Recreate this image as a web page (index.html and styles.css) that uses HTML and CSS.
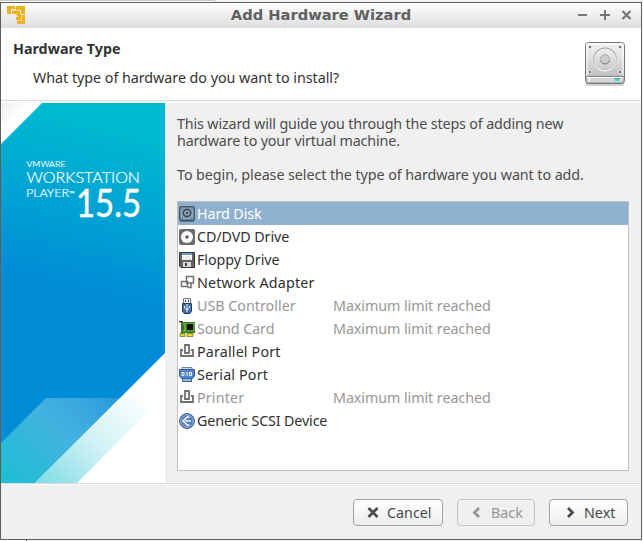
FILE: index.html
```html
<!DOCTYPE html>
<html lang="en">
<head>
<meta charset="utf-8">
<title>Add Hardware Wizard</title>
<link rel="stylesheet" href="styles.css">
</head>
<body>
<div class="desk-top"></div>
<main class="window">
  <header class="titlebar">
    <svg class="app-icon" width="18" height="18" viewBox="0 0 18 18" fill="#edb21c"><path d="M0 0H8V3H4V8H0ZM9 0H18V8H14V4H9ZM5 5H13V8H5ZM9 8H14V14H9V11H11ZM15 9H18V18H10V15H15Z"/><path d="M5 4.500H13M8.500 1V3M14.500 9V14.500H11" fill="none" stroke="#f6dc96"/></svg>
    <h1 class="title">Add Hardware Wizard</h1>
    <svg class="controls" width="56" height="12" viewBox="0 0 56 12" fill="none" stroke="#777" stroke-width="2"><path d="M2 5H11M24 5H34M29 0V10"/><path d="M46.500 1L54.500 9M54.500 1L46.500 9" stroke-width="2.300"/></svg>
  </header>
  <section class="heading">
    <div>
      <h2 class="step">Hardware Type</h2>
      <p class="question">What type of hardware do you want to install?</p>
    </div>
    <svg class="disk" width="42" height="46" viewBox="0 0 42 46">
      <defs>
        <linearGradient id="metal" x2="0" y2="1"><stop stop-color="#f2f2f2"/><stop offset=".35" stop-color="#e2e2e2"/><stop offset="1" stop-color="#b0b0b0"/></linearGradient>
        <linearGradient id="ring" x2="0" y2="1"><stop stop-color="#9b9b9b"/><stop offset="1" stop-color="#f2f2f2"/></linearGradient>
      </defs>
      <rect x="2" y="39" width="38" height="6" rx="2" fill="#999" opacity=".45"/>
      <rect x="1.500" y="1.500" width="39" height="41" rx="3" fill="url(#metal)" stroke="#777"/>
      <path d="M3 35V3H39V35" fill="none" stroke="#fff"/>
      <path d="M2 35.500H40" stroke="#858585"/>
      <path d="M3 37H39V41H3Z" fill="#d5d5d5"/><path d="M3 36.500H39M5.500 37V41" stroke="#fff"/>
      <circle cx="21" cy="18.500" r="11.500" fill="none" stroke="url(#ring)" stroke-width="1.200"/>
      <circle cx="21" cy="18.500" r="4.800" fill="#ccc" stroke="#aaa"/><path d="M16.500 20A5 5 0 0 0 25.500 20" fill="none" stroke="#888"/>
      <g fill="#737373" stroke="#f5f5f5" stroke-width=".8"><circle cx="6" cy="6" r="1.700"/><circle cx="36" cy="6" r="1.700"/><circle cx="6" cy="31" r="1.700"/><circle cx="36" cy="31" r="1.700"/></g>
      <path d="M30 37.500H36" stroke="#888"/><path d="M31 39H35.500" stroke="#16e6f2" stroke-width="2"/>
    </svg>
  </section>
  <div class="content">
    <svg class="brand" width="164" height="380" viewBox="0 0 164 380">
      <defs>
        <linearGradient id="sky" gradientUnits="userSpaceOnUse" x1="100" y1="20" x2="60" y2="185"><stop stop-color="#00bad0"/><stop offset="1" stop-color="#008cd6"/></linearGradient>
        <linearGradient id="band" gradientUnits="userSpaceOnUse" x1="15" y1="380" x2="110" y2="285"><stop stop-color="#21bdd4"/><stop offset=".5" stop-color="#43b3e0"/><stop offset=".7" stop-color="#3da9df"/><stop offset="1" stop-color="#2798dc"/></linearGradient>
        <linearGradient id="fade" gradientUnits="userSpaceOnUse" x1="42" y1="385" x2="140" y2="287"><stop stop-color="#7edde5"/><stop offset=".5" stop-color="#d1f2f5"/><stop offset="1" stop-color="#fff"/></linearGradient>
        <linearGradient id="corner" x2="1" y2="1"><stop stop-color="#f0f0f0"/><stop offset=".4" stop-color="#fff"/></linearGradient>
      </defs>
      <rect width="164" height="380" fill="url(#sky)"/>
      <path d="M0 0H41L0 41Z" fill="url(#corner)"/>
      <path d="M45 295H119L34 380H0V340Z" fill="url(#band)"/>
      <path d="M164 250V380H34Z" fill="#fff"/>
      <path d="M119 295H161L76 380H34Z" fill="url(#fade)"/>
      <g class="brand-text">
        <text x="25.500" y="63.500" font-size="8.500" textLength="39" lengthAdjust="spacingAndGlyphs">VMWARE</text>
        <text x="25.500" y="80" font-size="15" textLength="113.500" lengthAdjust="spacingAndGlyphs">WORKSTATION</text>
        <text x="25" y="94" font-size="11.500" textLength="43" lengthAdjust="spacingAndGlyphs">PLAYER</text>
        <text x="68" y="94" font-size="8">™</text>
        <text class="version" x="75" y="114" font-size="39" textLength="65" lengthAdjust="spacingAndGlyphs">15.5</text>
      </g>
    </svg>
    <section class="body">
      <p class="intro"><span class="line">This wizard will guide you through the steps of adding new</span><span class="line">hardware to your virtual machine.</span></p>
      <p class="intro begin"><span class="line wide">To begin, please select the type of hardware you want to add.</span></p>
      <ul class="list">
        <li class="row selected">
          <svg width="16" height="16" viewBox="0 0 16 16"><rect x=".75" y=".75" width="14.500" height="13.500" rx="1.500" fill="#8faac1" stroke="#465766" stroke-width="1.500"/><path d="M1 15H15" stroke="#465766" stroke-width="1.500"/><circle cx="8" cy="7" r="3.700" fill="#8faac1" stroke="#3e4e5d" stroke-width="1.800"/><circle cx="8" cy="7" r="1.200" fill="#34495b"/><path d="M2.500 3H4M12 3H13.500M2.500 12H4M12 12H13.500" stroke="#465766"/></svg>
          <span class="name">Hard Disk</span></li>
        <li class="row">
          <svg width="16" height="16" viewBox="0 0 16 16"><rect width="16" height="16" rx="2" fill="#6c6c6c"/><circle cx="8" cy="8" r="6" fill="#fff"/><circle cx="8" cy="8" r="1.700" fill="#555"/></svg>
          <span class="name">CD/DVD Drive</span></li>
        <li class="row">
          <svg width="16" height="16" viewBox="0 0 16 16"><path d="M.5.5H15.500V15.500H2L.5 14Z" fill="#626262" stroke="#333"/><path d="M3 1H13V8H3Z" fill="#f7faff"/><path d="M3 1H13V3H3Z" fill="#7099cb"/><path d="M4 5H12M4 7H12" stroke="#ddd"/><path d="M4 10H12V15H4Z" fill="#d9d9d9"/><path d="M6 11H8V14H6Z" fill="#444"/></svg>
          <span class="name">Floppy Drive</span></li>
        <li class="row">
          <svg width="16" height="16" viewBox="0 0 16 16" fill="none" stroke="#707070" stroke-width="1.500"><path d="M7.500 1.500H14.500V8H7.500ZM2.500 6.500H8.500V11.500H2.500ZM8.500 12.500H12V8"/></svg>
          <span class="name plus">Network Adapter</span></li>
        <li class="row disabled">
          <svg width="16" height="16" viewBox="0 0 16 16"><path d="M4.500.5H11.500V6H4.500Z" fill="#eee" stroke="#777"/><path d="M6 2H7V4H6ZM9 2H10V4H9Z" fill="#444"/><path d="M3.500 5.500H12.500V13L11 15.500H5L3.500 13Z" fill="#456da8" stroke="#1d3e75"/><path d="M8 6V14M5.500 8V10L8 12L10.500 10V8" fill="none" stroke="#f4f7ff"/></svg>
          <span class="name even">USB Controller</span><span class="limit">Maximum limit reached</span></li>
        <li class="row disabled">
          <svg width="16" height="16" viewBox="0 0 16 16"><path d="M0 .5H3V15" fill="none" stroke="#222" stroke-width="1.500"/><path d="M3 1H16V12H3Z" fill="#347b20"/><path d="M4 3H6V10H4" fill="none" stroke="#8bd44a"/><rect x="8" y="3" width="6" height="6" fill="#111"/><path d="M7.500 2.500H15M7.500 9.800H15M15 2.500V10" fill="none" stroke="#b0d46b" stroke-dasharray="1 1"/><path d="M1 12.500H6V15.500H1ZM8 12.500H14V15.500H8Z" fill="#e9d829" stroke="#4b5710" stroke-width=".6"/></svg>
          <span class="name">Sound Card</span><span class="limit">Maximum limit reached</span></li>
        <li class="row">
          <svg width="16" height="16" viewBox="0 0 16 16" fill="none" stroke="#707070" stroke-width="1.800"><path d="M6 9V1H10V9ZM4 6H2V12H14V6H12"/></svg>
          <span class="name plus">Parallel Port</span></li>
        <li class="row">
          <svg width="16" height="16" viewBox="0 0 16 16"><path d="M3 .5H13V3H3Z" fill="#ccd8e7" stroke="#70849d"/><path d="M.5 2.500H15.500V9L13.500 11.500H2.500L.5 9Z" fill="#5585c2" stroke="#345f98"/><path d="M3.500 11.500H12.500V14.500H3.500Z" fill="#97b9e2" stroke="#345f98"/><path d="M3 5.500H5V8.500H3ZM8 5V9M10.500 5.500H12.500V8.500H10.500Z" fill="none" stroke="#fff" stroke-width=".9"/></svg>
          <span class="name plus">Serial Port</span></li>
        <li class="row disabled">
          <svg width="16" height="16" viewBox="0 0 16 16" fill="none" stroke="#707070" stroke-width="1.800"><path d="M6 9V1H10V9ZM4 6H2V12H14V6H12"/></svg>
          <span class="name plus">Printer</span><span class="limit">Maximum limit reached</span></li>
        <li class="row">
          <svg width="16" height="16" viewBox="0 0 16 16"><circle cx="8" cy="8" r="7.400" fill="#527eb9" stroke="#304f7b"/><circle cx="8" cy="8" r="6.300" fill="none" stroke="#9cb9dd"/><path d="M10.500 4.500L8.500 3.700L4 8L8.500 12.300L10.500 11.500M6 8H12" fill="none" stroke="#e9f1fb" stroke-width="1.600"/></svg>
          <span class="name tight">Generic SCSI Device</span></li>
      </ul>
    </section>
  </div>
  <footer class="actions">
    <button class="button cancel"><svg width="12" height="12" viewBox="0 0 12 12"><path d="M1.500 1L10.500 10M10.500 1L1.500 10"/></svg><span>Cancel</span></button>
    <button class="button back" disabled><svg width="12" height="12" viewBox="0 0 12 12"><path d="M8 1L3.500 5.500L8 10"/></svg><span>Back</span></button>
    <button class="button next"><svg width="12" height="12" viewBox="0 0 12 12"><path d="M4 1L8.500 5.500L4 10"/></svg><span>Next</span></button>
  </footer>
</main>
<div class="desk-bottom"></div>
</body>
</html>
```
FILE: styles.css
```css
* { box-sizing: border-box; }
body { margin: 0; width: 643px; height: 541px; overflow: hidden; background: #f4f4f4; font: 14.3px/17px "Noto Sans", sans-serif; color: #4c4c4c; }
h1, h2, p, ul { margin: 0; padding: 0; }
svg { display: block; flex: none; }
.desk-top { width: 215px; height: 2px; background: #fff; border: solid #c6c6c6; border-width: 1px 1px 0 0; }
.desk-bottom { height: 1px; width: 27px; background: #fff; border-right: 1px solid #555; }
.window { width: 642px; height: 538px; border: 1px solid #5e5e5e; background: #f0f0f0; display: flex; flex-direction: column; }
.titlebar { height: 25px; flex: none; background: linear-gradient(#fefefe, #dedede); display: grid; grid-template-columns: 80px 1fr 80px; align-items: center; }
.app-icon { margin: -1px 0 0 6px; }
.title { margin-top: -2px; font: bold 14.67px/20px "DejaVu Sans", sans-serif; color: #606060; text-align: center; white-space: nowrap; }
.controls { justify-self: end; margin: 0 9px 0 0; }
.heading { height: 75px; flex: none; background: #fff; border-bottom: 2px solid #fafafa; box-shadow: inset 0 -1px #dcdcdc; display: flex; justify-content: space-between; padding: 12px 15px 0 12px; color: #333; white-space: nowrap; }
.disk { margin-top: 1px; }
.step { font-size: 14.3px; line-height: 17px; font-weight: 700; }
.question { margin: 12px 0 0 20px; letter-spacing: -.03px; }
.content { height: 380px; flex: none; display: flex; }
.brand-text { font-family: Lato, sans-serif; font-weight: 300; fill: #fff; stroke: #fff; stroke-width: .2px; }
.version { font-weight: 400; stroke-width: .5px; }
.body { flex: 1; padding: 12px 12px 0; white-space: nowrap; }
.line { display: block; letter-spacing: -.145px; }
.wide { letter-spacing: -.07px; }
.begin { margin-top: 17px; }
.list { height: 270px; margin-top: 18px; border: 1px solid #c0c0c0; background: #fff; list-style: none; color: #303030; }
.row { height: 23px; display: flex; align-items: center; padding-left: 1px; }
.name { width: 136px; margin-left: 2px; letter-spacing: -.08px; }
.even { letter-spacing: 0; }
.plus { letter-spacing: .16px; }
.tight { letter-spacing: -.14px; }
.limit { letter-spacing: -.07px; }
.selected { background: #8fb1cf; color: #fff; }
.disabled { color: #979797; }
.actions { height: 56px; border-top: 1px solid #dcdcdc; box-shadow: inset 0 1px #fafafa; padding: 15px 13px 0; display: flex; justify-content: flex-end; gap: 14px; }
.button { height: 27px; font: inherit; color: #484848; border: 1px solid #a3a3a3; border-radius: 4px; background: linear-gradient(#fff, #ededed); display: flex; align-items: center; padding: 0; white-space: nowrap; }
.button svg { fill: none; stroke: #4d4d4d; stroke-width: 2.8; }
.cancel { width: 90px; padding-left: 13px; gap: 8px; }
.back { width: 78px; padding-left: 13px; gap: 8px; color: #969696; border-color: #c6c6c6; background: #efefef; }
.button.back svg { stroke: #969696; }
.next { width: 79px; padding-left: 14px; gap: 8px; }
```
